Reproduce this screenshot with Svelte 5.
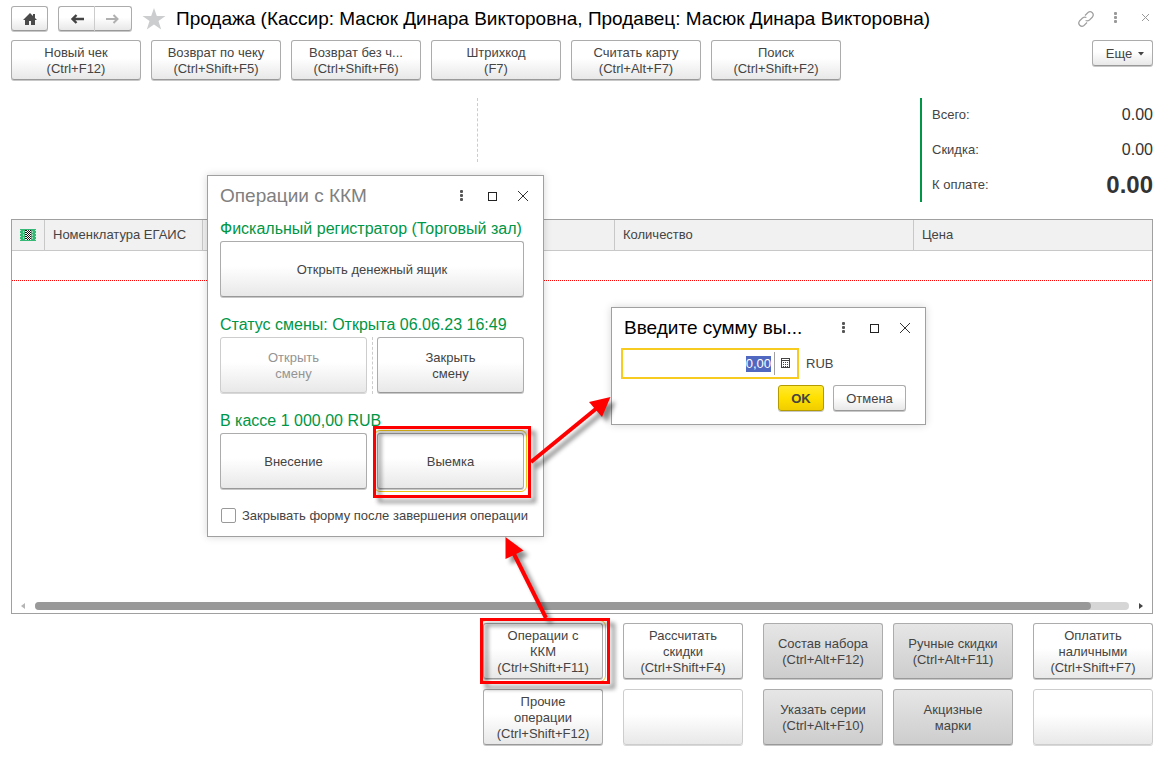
<script lang="ts">
  // Cashier workplace: sale form with the cash register dialog and the
  // withdrawal amount prompt on top of it.
  import { onMount } from 'svelte';

  type Action = {
    lines: string[];
    kind?: 'gray' | 'empty' | 'current';
  };

  const toolbar: string[][] = [
    ['Новый чек', '(Ctrl+F12)'],
    ['Возврат по чеку', '(Ctrl+Shift+F5)'],
    ['Возврат без ч...', '(Ctrl+Shift+F6)'],
    ['Штрихкод', '(F7)'],
    ['Считать карту', '(Ctrl+Alt+F7)'],
    ['Поиск', '(Ctrl+Shift+F2)'],
  ];

  const actions: Action[] = [
    { lines: ['Операции с', 'ККМ', '(Ctrl+Shift+F11)'], kind: 'current' },
    { lines: ['Рассчитать', 'скидки', '(Ctrl+Shift+F4)'] },
    { lines: ['Состав набора', '(Ctrl+Alt+F12)'], kind: 'gray' },
    { lines: ['Ручные скидки', '(Ctrl+Alt+F11)'], kind: 'gray' },
    { lines: ['Оплатить', 'наличными', '(Ctrl+Shift+F7)'] },
    { lines: ['Прочие', 'операции', '(Ctrl+Shift+F12)'] },
    { lines: [], kind: 'empty' },
    { lines: ['Указать серии', '(Ctrl+Alt+F10)'], kind: 'gray' },
    { lines: ['Акцизные', 'марки'], kind: 'gray' },
    { lines: [], kind: 'empty' },
  ];

  const totals = [
    { label: 'Всего:', value: '0.00' },
    { label: 'Скидка:', value: '0.00' },
    { label: 'К оплате:', value: '0.00', due: true },
  ];

  let amount = $state('0,00');
  let closeAfter = $state(false);
  let amountInput: HTMLInputElement;

  onMount(() => {
    amountInput.focus();
    amountInput.select();
  });
</script>

{#snippet windowButtons()}
  <div class="window-buttons">
    <button class="plain" aria-label="Меню">
      <svg width="14" height="14" viewBox="0 0 14 14" fill="#555">
        <rect x="6" y="1" width="3" height="3" rx="1" />
        <rect x="6" y="5" width="3" height="3" rx="1" />
        <rect x="6" y="9" width="3" height="3" rx="1" />
      </svg>
    </button>
    <button class="plain" aria-label="Развернуть">
      <svg width="14" height="14" viewBox="0 0 14 14" fill="none" stroke="#222">
        <rect x="3.5" y="3.500" width="8" height="8" />
      </svg>
    </button>
    <button class="plain" aria-label="Закрыть">
      <svg width="14" height="14" viewBox="0 0 14 14" fill="none" stroke="#333">
        <path d="M2 2L12 12M12 2L2 12" />
      </svg>
    </button>
  </div>
{/snippet}

<main>
  <header>
    <button class="btn home" aria-label="Начальная страница">
      <svg width="16" height="14" viewBox="0 0 16 14" fill="#4a4a4a">
        <path d="M8 1L1 8H3V13H7V9H9V13H13V8H15L13 6V2H11V4Z" />
      </svg>
    </button>
    <div class="history">
      <button class="btn" aria-label="Назад">
        <svg width="16" height="12" viewBox="0 0 16 12" fill="none" stroke="#444" stroke-width="2.4">
          <path d="M15 6H3M7.500 2L3.500 6L7.500 10" />
        </svg>
      </button>
      <button class="btn" aria-label="Вперед">
        <svg width="16" height="12" viewBox="0 0 16 12" fill="none" stroke="#b0b0b0" stroke-width="2">
          <path d="M1 6H13M8.500 2L12.500 6L8.500 10" />
        </svg>
      </button>
    </div>
    <button class="plain star" aria-label="Избранное">
      <svg width="24" height="22" viewBox="0 0 24 22" fill="#cbcdcf">
        <path d="M12 0L14.8 8H23.5L16.5 13L19.2 21.5L12 16.4L4.8 21.5L7.5 13L.5 8H9.2Z" />
      </svg>
    </button>
    <h1>Продажа (Кассир: Масюк Динара Викторовна, Продавец: Масюк Динара Викторовна)</h1>
    <div class="form-buttons">
      <button class="plain" aria-label="Ссылка">
        <svg width="18" height="18" viewBox="0 0 18 18" fill="none" stroke="#a0a0a0" stroke-width="1.2">
          <path d="M8 5.5L11 2.5Q13.2 .8 15.3 2.7Q17.2 4.8 15.5 7L12.5 10Q10.6 11.5 8.6 10.5" />
          <path d="M10 12.5L7 15.5Q4.8 17.2 2.7 15.3Q.8 13.2 2.5 11L5.5 8Q7.4 6.5 9.4 7.5" />
        </svg>
      </button>
      <button class="plain" aria-label="Меню">
        <svg width="14" height="14" viewBox="0 0 14 14" fill="#999">
          <rect x="5" y="0" width="3" height="3" rx="1" />
          <rect x="5" y="4" width="3" height="3" rx="1" />
          <rect x="5" y="8" width="3" height="3" rx="1" />
        </svg>
      </button>
      <button class="plain" aria-label="Закрыть">
        <svg width="14" height="14" viewBox="0 0 14 14" fill="none" stroke="#999">
          <path d="M3 2L10 9M10 2L3 9" />
        </svg>
      </button>
    </div>
  </header>

  <nav class="toolbar">
    {#each toolbar as lines}
      <button class="btn tool">
        {#each lines as line}<span>{line}</span>{/each}
      </button>
    {/each}
    <button class="btn more">
      Еще
      <svg width="6" height="4" viewBox="0 0 6 4" fill="#444"><path d="M0 0H6L3 3.5Z" /></svg>
    </button>
  </nav>

  <section class="summary">
    <div></div>
    <div class="split"></div>
    <dl class="totals">
      {#each totals as t}
        <div>
          <dt>{t.label}</dt>
          <dd class:due={t.due}>{t.value}</dd>
        </div>
      {/each}
    </dl>
  </section>

  <section class="goods">
    <table>
      <colgroup>
        <col class="c-icon" />
        <col class="c-egais" />
        <col />
        <col class="c-qty" />
        <col class="c-price" />
      </colgroup>
      <thead>
        <tr>
          <th class="mark">
            <svg width="16" height="12" viewBox="0 0 16 12" role="img" aria-label="Марка">
              <rect width="16" height="12" fill="#36b877" />
              <path d="M.5 1V12M15.5 1V12" stroke="#c4ecd6" stroke-dasharray="1 2" />
              <path d="M3.5 2V10M12.5 2V10" stroke="#8fdcb1" stroke-dasharray="2 1" />
              <rect x="5" y="1" width="6" height="10" fill="#fff" />
              <path d="M6.500 1V11M8.500 1V11M10.500 1V11" stroke="#111" stroke-dasharray="1 1" />
              <path d="M5.500 1V11M7.500 2V11M9.500 2V11" stroke="#111" stroke-dasharray="1 1" />
            </svg>
          </th>
          <th>Номенклатура ЕГАИС</th>
          <th></th>
          <th>Количество</th>
          <th>Цена</th>
        </tr>
      </thead>
      <tbody>
        <tr><td colspan="5"></td></tr>
      </tbody>
    </table>
    <div class="scroll">
      <svg width="4" height="6" viewBox="0 0 4 6" fill="#b5b5b5"><path d="M4 0V6L0 3Z" /></svg>
      <div class="track"><div class="thumb"></div></div>
      <svg width="4" height="6" viewBox="0 0 4 6" fill="#444"><path d="M0 0V6L4 3Z" /></svg>
    </div>
  </section>

  <footer>
    {#each actions as a}
      <button class="btn action {a.kind ?? ''}" disabled={a.kind === 'empty'}>
        {#each a.lines as line}<span>{line}</span>{/each}
      </button>
    {/each}
  </footer>

  <div class="dialog kkm" role="dialog" aria-labelledby="kkm-title">
    <div class="dialog-head">
      <h2 id="kkm-title">Операции с ККМ</h2>
      {@render windowButtons()}
    </div>
    <div class="group">
      <h3>Фискальный регистратор (Торговый зал)</h3>
      <div class="pair"><button class="btn">Открыть денежный ящик</button></div>
    </div>
    <div class="group">
      <h3>Статус смены: Открыта 06.06.23 16:49</h3>
      <div class="pair divided">
        <button class="btn" disabled><span>Открыть</span><span>смену</span></button>
        <button class="btn"><span>Закрыть</span><span>смену</span></button>
      </div>
    </div>
    <div class="group">
      <h3>В кассе 1 000,00 RUB</h3>
      <div class="pair">
        <button class="btn">Внесение</button>
        <button class="btn current">Выемка</button>
      </div>
    </div>
    <label class="check">
      <input type="checkbox" bind:checked={closeAfter} />
      Закрывать форму после завершения операции
    </label>
  </div>

  <div class="dialog amount" role="dialog" aria-labelledby="amount-title">
    <div class="dialog-head">
      <h2 id="amount-title">Введите сумму вы...</h2>
      {@render windowButtons()}
    </div>
    <div class="amount-row">
      <div class="field">
        <input id="amount" type="text" bind:value={amount} bind:this={amountInput} />
        <button class="plain" aria-label="Калькулятор">
          <svg width="11" height="11" viewBox="0 0 11 11" fill="none" stroke="#444">
            <rect x=".5" y=".5" width="8" height="9" />
            <path d="M0 2.5H9" />
            <path d="M2 4.5H7M2 6.5H7M2 8.5H7" stroke-dasharray="1 1" />
          </svg>
        </button>
      </div>
      <label for="amount">RUB</label>
    </div>
    <div class="amount-buttons">
      <button class="btn ok">OK</button>
      <button class="btn">Отмена</button>
    </div>
  </div>

  <!-- step markers: frames around the pressed buttons and arrows between them -->
  <svg class="steps" width="1172" height="758" viewBox="0 0 1172 758" aria-hidden="true">
    <g fill="none" stroke="#f00" stroke-width="3">
      <rect x="374.5" y="427.5" width="155" height="69" />
      <rect x="481.5" y="619.5" width="127" height="63" />
    </g>
    <g stroke="#f00" stroke-width="4">
      <path d="M531 462L597 408" />
      <path d="M546 618L513 552" />
    </g>
    <g fill="#f00">
      <path d="M610.5 397L589 402L602 417Z" />
      <path d="M505.5 537V559L523.5 550.5Z" />
    </g>
  </svg>
</main>

<style>
  :global(body) {
    margin: 0;
    background: #fff;
  }

  main {
    position: relative;
    box-sizing: border-box;
    display: flex;
    flex-direction: column;
    min-height: 100vh;
    padding: 6px 19px 12px 11px;
    font-family: 'Liberation Sans', Arial, sans-serif;
    font-size: 13px;
    line-height: 16px;
    color: #444;
  }

  h1,
  h2,
  h3,
  dl,
  dd {
    margin: 0;
    font-weight: normal;
  }

  button,
  input {
    font: inherit;
    color: inherit;
  }

  .btn {
    box-sizing: border-box;
    display: flex;
    align-items: center;
    justify-content: center;
    margin: 0 0 1px;
    padding: 1px 0 0;
    border: 1px solid #acacac;
    border-bottom-color: #999;
    border-radius: 3px;
    background: linear-gradient(#fff 0%, #fff 45%, #e8e8e8 100%);
    box-shadow: 0 1px 0 #c8c8c8;
    white-space: nowrap;
  }

  .btn:disabled {
    border-color: #cdcdcd;
    box-shadow: 0 1px 0 #d8d8d8;
    color: #949494;
  }

  .plain {
    display: flex;
    align-items: center;
    justify-content: center;
    padding: 0;
    border: 0;
    background: none;
  }

  header {
    display: flex;
    align-items: center;
    height: 26px;
  }

  header .btn {
    width: 37px;
    height: 25px;
    padding: 0;
  }

  .history {
    display: flex;
    margin-left: 10px;
  }

  .history .btn:first-child {
    border-right-color: #ccc;
    border-radius: 3px 0 0 3px;
  }

  .history .btn:last-child {
    border-left: 0;
    border-radius: 0 3px 3px 0;
  }

  .star {
    margin: 0 10px;
  }

  h1 {
    flex: 1;
    font-size: 19px;
    line-height: 24px;
    color: #000;
    white-space: nowrap;
  }

  .form-buttons {
    display: flex;
    margin-right: -8px;
  }

  .form-buttons .plain {
    width: 30px;
    height: 26px;
  }

  .toolbar {
    display: flex;
    align-items: flex-start;
    gap: 10px;
    margin-top: 8px;
  }

  .tool {
    flex-direction: column;
    width: 130px;
    height: 40px;
  }

  .more {
    gap: 6px;
    width: 61px;
    height: 26px;
    margin-left: auto;
    padding-left: 5px;
  }

  .summary {
    display: grid;
    grid-template-columns: 41fr 39fr 233px;
    margin-top: 17px;
  }

  .split {
    height: 64px;
    border-left: 1px dashed #ccc;
  }

  .totals {
    border-left: 2px solid #009646;
    padding-left: 10px;
  }

  .totals div {
    display: flex;
    align-items: center;
    justify-content: space-between;
    height: 35px;
  }

  .totals div:first-child {
    height: 34px;
  }

  dd {
    font-size: 16px;
    color: #333;
  }

  .due {
    font-size: 24px;
    font-weight: bold;
  }

  .goods {
    flex: 1;
    display: flex;
    flex-direction: column;
    justify-content: space-between;
    margin-top: 17px;
    border: 1px solid #a0a0a0;
  }

  table {
    width: 100%;
    table-layout: fixed;
    border-collapse: separate;
    border-spacing: 0;
  }

  .c-icon {
    width: 33px;
  }

  .c-egais {
    width: 158px;
  }

  .c-qty {
    width: 299px;
  }

  .c-price {
    width: 238px;
  }

  th {
    box-sizing: border-box;
    height: 31px;
    padding: 0 8px;
    border-right: 1px solid #c8c8c8;
    border-bottom: 1px solid #c8c8c8;
    background: #f1f1f1;
    font-weight: normal;
    text-align: left;
    white-space: nowrap;
  }

  th:last-child {
    border-right: 0;
  }

  .mark svg {
    display: block;
  }

  td {
    box-sizing: border-box;
    height: 30px;
    padding: 0;
    background: repeating-linear-gradient(90deg, #f00 0 1px, #fff 1px 2px) bottom / 100% 1px no-repeat;
  }

  .scroll {
    display: flex;
    align-items: center;
    gap: 10px;
    padding: 0 9px 3px;
  }

  .track {
    flex: 1;
    height: 8px;
    border-radius: 4px;
    background: #d6d6d6;
  }

  .thumb {
    width: 96.5%;
    height: 8px;
    border-radius: 4px;
    background: #999;
  }

  /* the two gray columns stand closer to each other */
  footer {
    display: grid;
    grid-template-columns: 120px 120px 120px 110px 120px;
    justify-content: end;
    gap: 9px 20px;
    margin-top: 9px;
  }

  .action {
    flex-direction: column;
    width: 120px;
    height: 56px;
  }

  .action:nth-child(5n + 4) {
    margin-left: -10px;
  }

  .gray {
    background: linear-gradient(#e6e6e6, #cdcdcd);
  }

  .dialog {
    position: absolute;
    box-sizing: border-box;
    padding: 0 19px 0 12px;
    border: 1px solid #a0a0a0;
    background: #fff;
    box-shadow: 0 0 8px rgba(0, 0, 0, 0.16);
  }

  .kkm {
    left: 207px;
    top: 175px;
    width: 337px;
    padding-bottom: 10px;
  }

  .amount {
    left: 611px;
    top: 307px;
    width: 315px;
    padding-bottom: 12px;
  }

  .dialog-head {
    display: flex;
    align-items: center;
    justify-content: space-between;
    height: 40px;
    margin-right: -14px;
  }

  h2 {
    font-size: 19px;
    line-height: 24px;
    color: #808080;
    white-space: nowrap;
  }

  .amount h2 {
    color: #000;
  }

  .window-buttons {
    display: flex;
  }

  .window-buttons .plain {
    width: 31px;
    height: 30px;
  }

  .group {
    margin-bottom: 15px;
  }

  h3 {
    font-size: 16px;
    line-height: 25px;
    color: #009646;
    white-space: nowrap;
  }

  .group + .group h3 {
    line-height: 24px;
  }

  .pair {
    position: relative;
    display: flex;
    gap: 10px;
  }

  .pair .btn {
    flex: 1;
    flex-direction: column;
    height: 56px;
  }

  .divided::before {
    content: '';
    position: absolute;
    left: 50%;
    top: 0;
    bottom: 0;
    border-left: 1px dashed #ccc;
  }

  .current {
    outline: 1px solid #f0c419;
    outline-offset: 2px;
  }

  .check {
    display: flex;
    align-items: center;
    gap: 6px;
    height: 21px;
    white-space: nowrap;
  }

  .check input {
    appearance: none;
    flex: none;
    box-sizing: border-box;
    width: 15px;
    height: 15px;
    margin: 0 0 0 1px;
    border: 1px solid #999;
    border-radius: 2px;
    background: #fff;
  }

  .check input:checked {
    background: #009646;
  }

  .amount-row {
    display: flex;
    align-items: center;
    gap: 7px;
    margin-left: -3px;
  }

  .field {
    box-sizing: border-box;
    display: flex;
    align-items: center;
    width: 178px;
    height: 31px;
    border: 2px solid #f8cb20;
  }

  .field input {
    flex: 1;
    min-width: 0;
    padding: 0 3px 0 0;
    border: 0;
    outline: none;
    text-align: right;
  }

  .field input::selection {
    background: #5068c0;
    color: #fff;
  }

  .field .plain {
    width: 23px;
    height: 23px;
    border-left: 1px solid #a0a0a0;
  }

  .amount-buttons {
    display: flex;
    justify-content: flex-end;
    gap: 9px;
    margin-top: 6px;
  }

  .amount-buttons .btn {
    width: 73px;
    height: 26px;
  }

  .amount-buttons .ok {
    width: 46px;
    border-color: #b39b00;
    background: linear-gradient(#ffe930, #ffe000 50%, #efcd00);
    font-weight: bold;
  }

  .steps {
    position: absolute;
    left: 0;
    top: 0;
    pointer-events: none;
    filter: drop-shadow(5px 5px 2px rgba(0, 0, 0, 0.45));
  }
</style>
